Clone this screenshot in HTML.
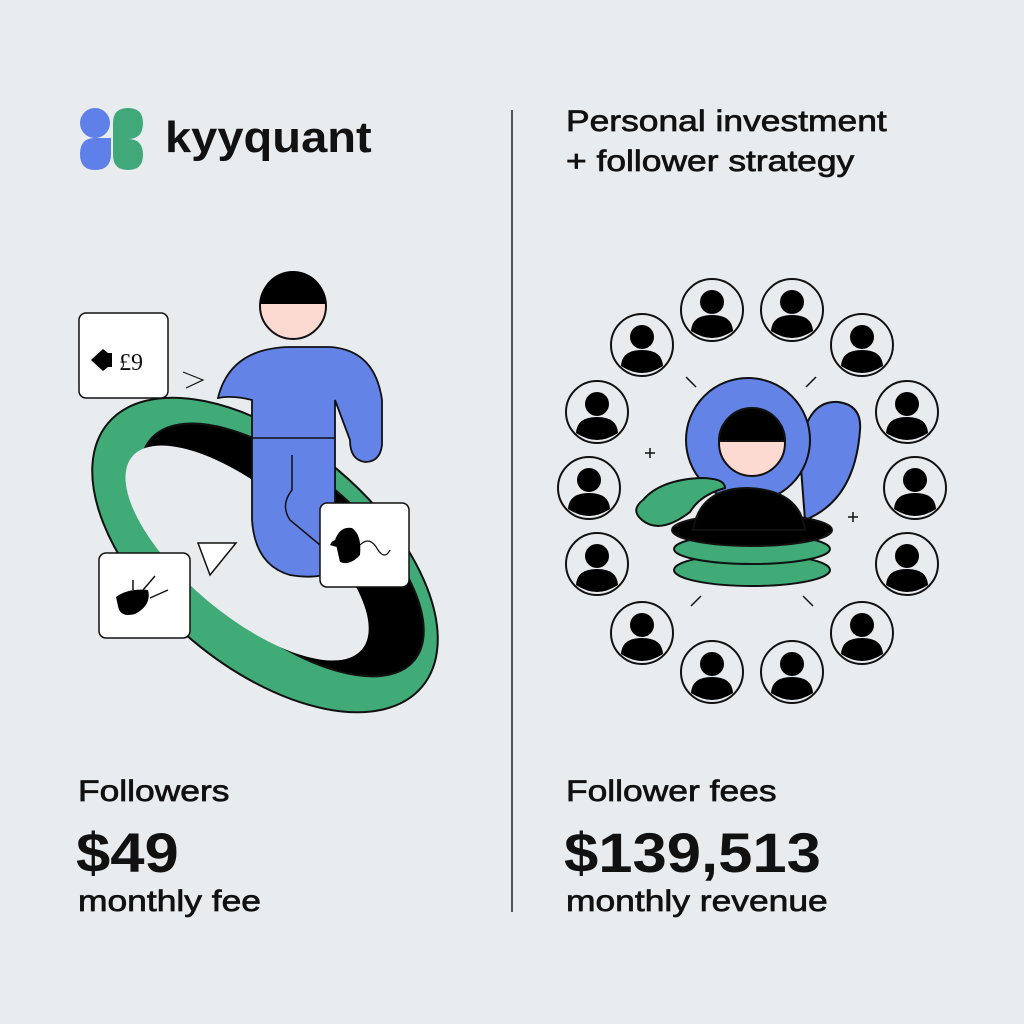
<!DOCTYPE html>
<html><head><style>
body{margin:0;width:1024px;height:1024px;background:#e9ecee;font-family:"Liberation Sans",sans-serif;overflow:hidden;position:relative}
.t{position:absolute;color:#111;font-weight:bold;white-space:nowrap;transform-origin:0 0}
.n{font-size:30px;font-weight:normal;-webkit-text-stroke:0.7px #111;transform:scaleX(1.18)}
.b{font-size:56px;transform:scaleX(1.1)}
</style></head><body>
<svg width="1024" height="1024" style="position:absolute;left:0;top:0">
<!-- logo -->
<circle cx="95" cy="123" r="15" fill="#5f80e8"/>
<path d="M111 138 L111 154 Q111 170 95 170 Q80 170 80 154 Q80 138 95 138 Z" fill="#5f80e8"/>
<path d="M113 139 L113 123 Q113 108 128 108 Q143 108 143 123 Q143 139 128 139 Z" fill="#41a979"/>
<path d="M113 139 L128 139 Q143 139 143 155 Q143 170 128 170 Q113 170 113 155 Z" fill="#41a979"/>
<line x1="512" y1="110" x2="512" y2="912" stroke="#222" stroke-width="1.5"/>
<!-- left ring -->
<g transform="rotate(40 265 555)" stroke="#111" stroke-width="2">
<ellipse cx="265" cy="555" rx="205" ry="112" fill="#41ab78"/>
<ellipse cx="275" cy="540" rx="172" ry="80" fill="#000"/>
<ellipse cx="250" cy="565" rx="150" ry="62" fill="#e9ecee" stroke="none"/>
</g>
<path d="M198 543 L236 543 L210 575 Z" fill="#fff" stroke="#111" stroke-width="1.5"/>
<!-- person -->
<path d="M218 398 Q230 348 290 347 L330 347 Q375 350 382 400 L382 445 Q380 462 365 462 Q350 460 350 440 L335 400 L335 570 Q320 580 290 575 Q255 565 252 520 L252 400 Q232 395 218 398 Z" fill="#6383e6" stroke="#111" stroke-width="1.8"/>
<line x1="252" y1="438" x2="335" y2="438" stroke="#111" stroke-width="1.5"/>
<path d="M292 455 L292 490 Q280 505 290 520 L320 545" fill="none" stroke="#111" stroke-width="1.5"/>
<circle cx="293" cy="306" r="33" fill="#fcd9d1" stroke="#111" stroke-width="2"/>
<path d="M260 304 A33 33 0 0 1 326 304 Z" fill="#000"/>
<path d="M183 372 L203 380 L186 388" fill="none" stroke="#111" stroke-width="1.2"/>
<!-- cards -->
<rect x="79" y="313" width="89" height="85" rx="7" fill="#fff" stroke="#111" stroke-width="1.5"/>
<path d="M91 360 L103 349 L108 353 L112 353 L112 367 L108 367 L103 371 Z" fill="#000"/>
<text x="119" y="370" font-size="24" font-family="Liberation Serif" fill="#111">£9</text>
<rect x="99" y="553" width="91" height="85" rx="7" fill="#fff" stroke="#111" stroke-width="1.5"/>
<path d="M116 597 Q128 588 148 590 Q152 605 135 614 Q120 618 118 606 Z" fill="#000"/>
<path d="M133 590 L133 580 M143 590 L155 576 M150 598 L168 590" stroke="#111" stroke-width="1.5"/>
<rect x="320" y="503" width="89" height="84" rx="7" fill="#fff" stroke="#111" stroke-width="1.5"/>
<path d="M335 540 Q340 526 352 528 Q362 535 360 555 Q350 566 340 562 Z M330 545 Q333 538 342 540 L340 548 Z" fill="#000"/>
<path d="M360 545 Q370 535 378 550 Q385 560 390 550" fill="none" stroke="#111" stroke-width="1.3"/>
<!-- center figure -->
<g stroke="#111" stroke-width="2">
<ellipse cx="752" cy="570" rx="78" ry="16" fill="#41ab78"/>
<ellipse cx="752" cy="549" rx="78" ry="15" fill="#41ab78"/>
<path d="M800 455 Q805 400 838 402 Q862 405 860 430 Q855 500 805 520 Z" fill="#6383e6"/>
<circle cx="748" cy="440" r="62" fill="#6383e6"/>
<ellipse cx="752" cy="530" rx="80" ry="16" fill="#000"/>
<path d="M693 530 Q700 488 748 488 Q800 490 805 530 Z" fill="#000"/>
<path d="M643 500 Q660 480 700 478 Q725 478 725 488 Q700 495 690 512 Q660 535 642 520 Q630 510 643 500 Z" fill="#41ab78"/>
<circle cx="752" cy="443" r="33" fill="#fcd9d1"/>
<path d="M719 441 A33 33 0 0 1 785 441 Z" fill="#000"/>
</g>
<g stroke="#111" stroke-width="1.5">
<path d="M686 377 L696 387 M816 377 L806 387 M691 606 L701 596 M813 606 L803 596 M645 453 L655 453 M650 448 L650 458 M848 517 L858 517 M853 512 L853 522"/>
</g>
</svg>
<svg width="1024" height="1024" style="position:absolute;left:0;top:0">
<defs><g id="a"><circle r="31" fill="#e9ecee" stroke="#111" stroke-width="2"/><circle cy="-8" r="12" fill="#000"/><path d="M-21 21 Q-20 5 0 5 Q20 5 21 21 Q10 28 0 28 Q-10 28 -21 21 Z" fill="#000"/></g></defs>
<use href="#a" x="712" y="310"/><use href="#a" x="792" y="310"/>
<use href="#a" x="642" y="345"/><use href="#a" x="862" y="345"/>
<use href="#a" x="597" y="412"/><use href="#a" x="907" y="412"/>
<use href="#a" x="589" y="488"/><use href="#a" x="915" y="488"/>
<use href="#a" x="597" y="564"/><use href="#a" x="907" y="564"/>
<use href="#a" x="642" y="633"/><use href="#a" x="862" y="633"/>
<use href="#a" x="712" y="672"/><use href="#a" x="792" y="672"/>
</svg>
<div class="t" style="left:165px;top:113px;font-size:44px;transform:scaleX(1.07)">kyyquant</div>
<div class="t n" style="left:566px;top:105px">Personal investment</div>
<div class="t n" style="left:566px;top:145px">+ follower strategy</div>
<div class="t n" style="left:78px;top:775px">Followers</div>
<div class="t b" style="left:76px;top:820px">$49</div>
<div class="t n" style="left:78px;top:885px">monthly fee</div>
<div class="t n" style="left:566px;top:775px">Follower fees</div>
<div class="t b" style="left:564px;top:820px">$139,513</div>
<div class="t n" style="left:566px;top:885px">monthly revenue</div>
</body></html>
